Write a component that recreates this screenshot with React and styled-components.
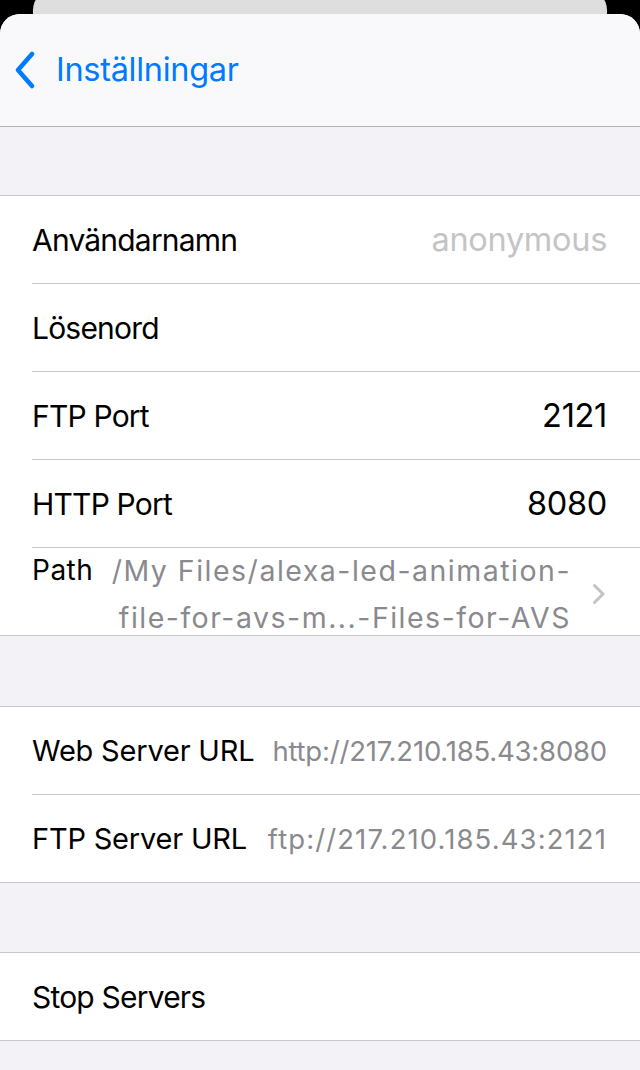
import React from 'react';
import styled, { createGlobalStyle } from 'styled-components';

const GlobalStyle = createGlobalStyle`
  html, body {
    margin: 0;
    padding: 0;
    background: #000;
  }
  * {
    box-sizing: border-box;
  }
`;

const Screen = styled.div`
  width: 640px;
  height: 1070px;
  overflow: hidden;
  background: #000;
  display: flex;
  flex-direction: column;
  font-family: Inter, "Noto Sans", sans-serif;
  -webkit-font-smoothing: antialiased;
`;

const BackCard = styled.div`
  flex: none;
  height: 24px;
  margin: -10px 33px 0;
  background: #dedede;
  border-radius: 20px 20px 0 0;
`;

const Sheet = styled.div`
  flex: 1;
  background: #f2f2f7;
  border-radius: 20px 20px 0 0;
  overflow: hidden;
`;

const NavBar = styled.div`
  height: 113px;
  background: #f9f9fb;
  border-bottom: 1px solid #b2b2b7;
  display: flex;
  align-items: center;
  padding: 0 0 0 15px;
  gap: 21px;
`;

const BackLabel = styled.span`
  color: #007aff;
  font-size: 32.5px;
  letter-spacing: -0.3px;
  margin-top: -1px;
`;

const Group = styled.div`
  margin-top: ${(p) => p.$gap}px;
  background: #fff;
  border-top: 1px solid #c8c7cc;
  border-bottom: 1px solid #c8c7cc;
`;

const Row = styled.div`
  height: 88px;
  margin-left: 32px;
  padding-right: 33px;
  display: flex;
  align-items: center;
  justify-content: space-between;
  gap: 18px;
  border-bottom: 1px solid #c8c7cc;

  &:last-child {
    height: 87px;
    border-bottom: none;
  }
`;

const Label = styled.span`
  flex: none;
  color: #000;
  font-size: ${(p) => p.$size || 30}px;
  letter-spacing: ${(p) => p.$spacing ?? -0.8}px;
`;

const Value = styled.span`
  color: ${(p) => p.$color || '#000'};
  font-size: ${(p) => p.$size || 32.5}px;
  letter-spacing: ${(p) => p.$spacing ?? -0.3}px;
  white-space: nowrap;
`;

const PathRow = styled(Row)`
  align-items: flex-start;
  padding-right: 35px;
  gap: 0;
`;

const PathText = styled.div`
  flex: 1;
  min-width: 0;
  color: #8a8a8e;
  font-size: 28.5px;
  line-height: 47px;
  letter-spacing: 1.5px;
  white-space: nowrap;
  text-align: right;
  margin: -1px 22px 0 0;
`;

const PathLabel = styled(Label)`
  line-height: 47px;
  margin-top: -1px;
`;

const Chevron = () => (
  <svg width="12" height="22" viewBox="0 0 12 22" style={{ flex: 'none', alignSelf: 'center', marginTop: '4px' }}>
    <path d="M1.5 2.5 L10 11 L1.5 19.5" fill="none" stroke="#c4c4c7" strokeWidth="3" strokeLinecap="round" strokeLinejoin="round" />
  </svg>
);

const BackChevron = () => (
  <svg width="20" height="38" viewBox="0 0 20 38">
    <path d="M17 3 L3 19 L17 35" fill="none" stroke="#007aff" strokeWidth="4.5" strokeLinecap="round" strokeLinejoin="round" />
  </svg>
);

export default function App() {
  return (
    <Screen>
      <GlobalStyle />
      <BackCard />
      <Sheet>
        <NavBar>
          <BackChevron />
          <BackLabel>Inställningar</BackLabel>
        </NavBar>

        <Group $gap={68}>
          <Row>
            <Label>Användarnamn</Label>
            <Value $color="#c4c4c6">anonymous</Value>
          </Row>
          <Row>
            <Label>Lösenord</Label>
          </Row>
          <Row>
            <Label>FTP Port</Label>
            <Value>2121</Value>
          </Row>
          <Row>
            <Label>HTTP Port</Label>
            <Value>8080</Value>
          </Row>
          <PathRow>
            <PathLabel $size={28} $spacing={0.5}>Path</PathLabel>
            <PathText>
              /My Files/alexa-led-animation-
              <br />
              file-for-avs-m...-Files-for-AVS
            </PathText>
            <Chevron />
          </PathRow>
        </Group>

        <Group $gap={70}>
          <Row>
            <Label $size={29} $spacing={-0.2}>Web Server URL</Label>
            <Value $color="#8a8a8e" $size={27.5} $spacing={-0.2}>http://217.210.185.43:8080</Value>
          </Row>
          <Row>
            <Label $size={29} $spacing={-0.2}>FTP Server URL</Label>
            <Value $color="#8a8a8e" $size={27.5} $spacing={1.1}>ftp://217.210.185.43:2121</Value>
          </Row>
        </Group>

        <Group $gap={69}>
          <Row>
            <Label>Stop Servers</Label>
          </Row>
        </Group>
      </Sheet>
    </Screen>
  );
}
